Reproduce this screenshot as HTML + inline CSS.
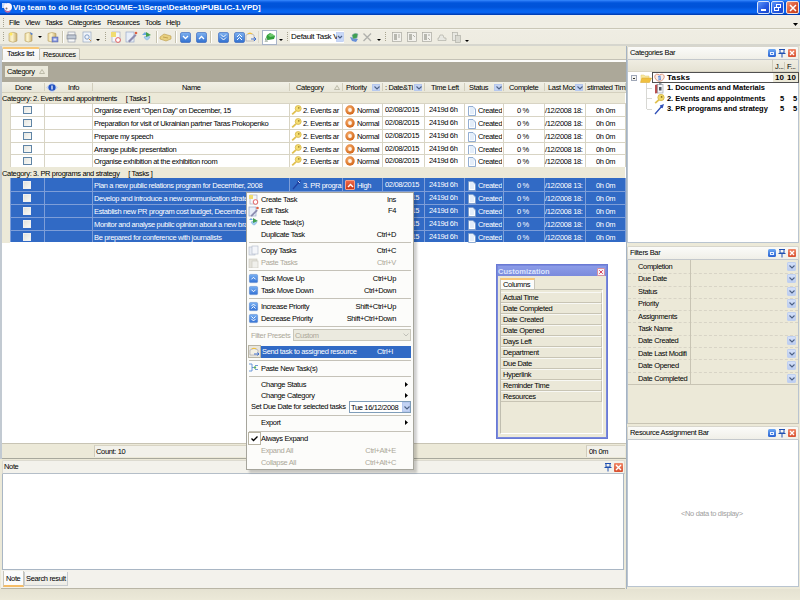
<!DOCTYPE html>
<html><head><meta charset="utf-8">
<style>
*{margin:0;padding:0;box-sizing:border-box}
html,body{width:800px;height:600px;overflow:hidden;background:#ECE9D8;font-family:"Liberation Sans",sans-serif;font-size:7.5px;letter-spacing:-0.35px;color:#000}
div,span{position:absolute}
.t{white-space:nowrap;line-height:9px}
</style></head><body>
<!-- TITLE BAR -->
<div id="title" style="left:0;top:0;width:800px;height:15px;background:linear-gradient(#3A8EFF 0px,#2070F0 1px,#0054DA 3px,#0052D8 7px,#0866F2 11px,#0862F0 13px,#0040B8 14px,#0040B8 15px)">
<svg style="position:absolute;left:2px;top:2px" width="10" height="11" viewBox="0 0 10 11"><rect x="0" y="1" width="4" height="5" fill="#E8F0FF" opacity=".85"/><circle cx="6" cy="5" r="4" fill="#FFF6FA"/><path d="M2 7Q5 11 9 8L8 10Q5 11.5 3 9.5Z" fill="#D86890"/><circle cx="4.5" cy="6.5" r="1" fill="#807070"/></svg>
<span class="t" style="left:13px;top:2px;font-size:8px;font-weight:bold;color:#fff;letter-spacing:0;line-height:11px">Vip team to do list [C:\DOCUME~1\Serge\Desktop\PUBLIC-1.VPD]</span>
<div style="left:757px;top:1px;width:13px;height:13px;border:1px solid #D8E4FA;border-radius:2px;background:linear-gradient(135deg,#5C95F8,#2255E0 60%,#1C47C8)"><div style="left:3px;top:7px;width:5px;height:2px;background:#fff"></div></div>
<div style="left:771px;top:1px;width:13px;height:13px;border:1px solid #D8E4FA;border-radius:2px;background:linear-gradient(135deg,#5C95F8,#2255E0 60%,#1C47C8)"><div style="left:4px;top:2px;width:5px;height:4px;border:1px solid #fff;border-top-width:1.5px"></div><div style="left:2px;top:4.5px;width:5px;height:4px;border:1px solid #fff;border-top-width:1.5px;background:#2A5CE0"></div></div>
<div style="left:786px;top:1px;width:13px;height:13px;border:1px solid #F4E0D8;border-radius:2px;background:linear-gradient(135deg,#F09070,#D8502E 60%,#C0401E)"><svg style="position:absolute;left:2px;top:2px" width="8" height="8"><path d="M1 1L7 7M7 1L1 7" stroke="#fff" stroke-width="1.5"/></svg></div>
</div>
<!-- MENU BAR -->
<div id="menubar" style="left:0;top:15px;width:800px;height:14px;background:linear-gradient(#EEF0F4 0px,#F0EEE5 1.5px,#F0EEE5);border-bottom:1px solid #CAC7B8">
<div style="left:3px;top:3px;width:1px;height:9px;border-left:1px dotted #A8A490"></div>
<span class="t" style="left:9px;top:3px">File</span>
<span class="t" style="left:25px;top:3px">View</span>
<span class="t" style="left:45px;top:3px">Tasks</span>
<span class="t" style="left:68px;top:3px">Categories</span>
<span class="t" style="left:107px;top:3px">Resources</span>
<span class="t" style="left:145px;top:3px">Tools</span>
<span class="t" style="left:166px;top:3px">Help</span>
<svg style="position:absolute;left:793px;top:8px" width="6" height="4"><path d="M0 0H5L2.5 3Z" fill="#000"/></svg>
</div>
<!-- TOOLBAR -->
<div id="toolbar" style="left:0;top:29px;width:800px;height:17px;background:linear-gradient(#FAFAF6 0px,#EFEDE3 1px,#EEECE1);border-bottom:2px solid #D6D6CE">
<svg style="position:absolute;left:0;top:0" width="800" height="16" viewBox="0 0 800 16">
<defs>
<linearGradient id="cyl" x1="0" x2="1"><stop offset="0" stop-color="#E8D8A0"/><stop offset=".4" stop-color="#FFF6D0"/><stop offset="1" stop-color="#C8B070"/></linearGradient>
<linearGradient id="bsq" x1="0" y1="0" x2="0" y2="1"><stop offset="0" stop-color="#7FB2F0"/><stop offset="1" stop-color="#2F6FD0"/></linearGradient>
<linearGradient id="gray" x1="0" x2="1"><stop offset="0" stop-color="#D8D6CC"/><stop offset="1" stop-color="#B0AEA4"/></linearGradient>
</defs>
<g fill="#A8A490"><rect x="3" y="3" width="1" height="1"/><rect x="3" y="5" width="1" height="1"/><rect x="3" y="7" width="1" height="1"/><rect x="3" y="9" width="1" height="1"/><rect x="3" y="11" width="1" height="1"/></g>
<!-- db new -->
<path d="M9 4.5 Q13 2 17 4.5 V12 Q13 14.5 9 12Z" fill="url(#cyl)" stroke="#B8A060" stroke-width=".6"/><circle cx="11" cy="5" r="1.6" fill="#FFE860"/>
<!-- open -->
<path d="M25 4.5 Q28.5 2.5 32 4.5 V12 Q28.5 14 25 12Z" fill="url(#cyl)" stroke="#B8A060" stroke-width=".6"/><path d="M30 3 L33 5 L31 6Z" fill="#4A7CD8"/>
<path d="M38 7H42L40 9Z" fill="#000"/>
<!-- save -->
<path d="M48 4.5 Q52 2.5 56 4.5 V12 Q52 14 48 12Z" fill="url(#cyl)" stroke="#B8A060" stroke-width=".6"/><rect x="52" y="8" width="6" height="5" fill="#8090D8" stroke="#5060A0" stroke-width=".5"/><rect x="53.5" y="9.5" width="3" height="2" fill="#E0E4F8"/>
<rect x="62" y="2" width="1" height="12" fill="#C8C4B0"/><rect x="63" y="2" width="1" height="12" fill="#fff"/>
<!-- print -->
<rect x="68" y="3" width="7" height="3" fill="#F4F4F4" stroke="#8890A0" stroke-width=".6"/><rect x="67" y="6" width="9" height="4" fill="#C0C8D4" stroke="#707888" stroke-width=".6"/><rect x="68" y="10" width="7" height="3" fill="#F8F8F8" stroke="#8890A0" stroke-width=".6"/>
<!-- preview -->
<rect x="83" y="3" width="8" height="10" fill="#F0F4FA" stroke="#98A8C0" stroke-width=".7"/><circle cx="87" cy="8" r="2.2" fill="none" stroke="#6888B8" stroke-width=".8"/><path d="M89 10L91 12" stroke="#D09040"/>
<path d="M96 10H100L98 12Z" fill="#000"/>
<g fill="#A8A490"><rect x="105" y="3" width="1" height="1"/><rect x="105" y="5" width="1" height="1"/><rect x="105" y="7" width="1" height="1"/><rect x="105" y="9" width="1" height="1"/><rect x="105" y="11" width="1" height="1"/></g>
<!-- create task -->
<rect x="112" y="3" width="8" height="10" fill="#F4F6FA" stroke="#98A0B8" stroke-width=".6"/><path d="M111 3H116V8H111Z" fill="#F0DC70"/><circle cx="118" cy="11" r="2.4" fill="#fff" stroke="#E05050" stroke-width=".9"/>
<!-- edit -->
<rect x="126" y="3" width="8" height="10" fill="#E8EEF8" stroke="#98A8C8" stroke-width=".7"/><path d="M128 12 L135 5 L136.5 6.5 L129.5 13.5Z" fill="#8C8CB0"/><circle cx="136" cy="4" r="1.3" fill="#E06040"/>
<!-- delete -->
<path d="M142 6 L145 3 L148 6" fill="#6BA8E0"/><path d="M144 8 Q147 14 150 8 Q147 6 144 8Z" fill="#A8D0F0" stroke="#70A8D8" stroke-width=".5"/><path d="M146 3 L151 6 L146 8Z" fill="#40A050"/>
<rect x="156" y="2" width="1" height="12" fill="#C8C4B0"/><rect x="157" y="2" width="1" height="12" fill="#fff"/>
<!-- glasses -->
<path d="M160 8 L164 5 L171 7 L171 10 L166 12 L160 10Z" fill="#E8D080" stroke="#B89848" stroke-width=".6"/><path d="M163 8 L168 9" stroke="#B89848" stroke-width=".8"/>
<rect x="175" y="2" width="1" height="12" fill="#C8C4B0"/><rect x="176" y="2" width="1" height="12" fill="#fff"/>
<!-- blue squares -->
<rect x="180.5" y="3.5" width="10" height="10" rx="1.5" fill="url(#bsq)" stroke="#3060B8" stroke-width=".6"/><path d="M183 7 L185.5 9.5 L188 7" fill="none" stroke="#fff" stroke-width="1.3"/>
<rect x="196.5" y="3.5" width="10" height="10" rx="1.5" fill="url(#bsq)" stroke="#3060B8" stroke-width=".6"/><path d="M199 10 L201.5 7.5 L204 10" fill="none" stroke="#fff" stroke-width="1.3"/>
<rect x="210" y="2" width="1" height="12" fill="#C8C4B0"/><rect x="211" y="2" width="1" height="12" fill="#fff"/>
<rect x="218.5" y="3.5" width="10" height="10" rx="1.5" fill="url(#bsq)" stroke="#3060B8" stroke-width=".6"/><path d="M221 5.5 L223.5 8 L226 5.5 M221 8.5 L223.5 11 L226 8.5" fill="none" stroke="#fff" stroke-width="1"/>
<rect x="234.5" y="3.5" width="10" height="10" rx="1.5" fill="url(#bsq)" stroke="#3060B8" stroke-width=".6"/><path d="M237 8 L239.5 5.5 L242 8 M237 11 L239.5 8.5 L242 11" fill="none" stroke="#fff" stroke-width="1"/>
<!-- send -->
<path d="M246 6 Q250 3 254 6 V12 H246Z" fill="#F4F0E4" stroke="#A0A0A8" stroke-width=".6"/><path d="M247 5 Q250 2 253 5" fill="#F0C040"/><path d="M251 10 H256 L254 8 M256 10 L254 12" stroke="#4070D0" stroke-width="1" fill="none"/>
<rect x="258" y="2" width="1" height="12" fill="#DDD9CA"/>
<!-- hat button -->
<rect x="262.5" y="1.5" width="14" height="14" fill="#fff" stroke="#A8B4C8" stroke-width="1"/>
<path d="M265 11 L267 6 L270 4 L275 7 L274 10 L268 11Z" fill="#30A038"/><path d="M268 6L272 4.5L275 7L270 8Z" fill="#70C870"/><path d="M264.5 13 L266.5 8 L268 13Z" fill="#B8C4B8"/>
<path d="M279 10H283L281 12Z" fill="#000"/>
<g fill="#A8A490"><rect x="287" y="3" width="1" height="1"/><rect x="287" y="5" width="1" height="1"/><rect x="287" y="7" width="1" height="1"/><rect x="287" y="9" width="1" height="1"/><rect x="287" y="11" width="1" height="1"/></g>
<!-- combo -->
<rect x="290" y="2" width="54" height="12" fill="#fff"/>
<rect x="336.5" y="3.5" width="7" height="9" fill="#C8D8F8" stroke="#B0C4F0" stroke-width=".6"/><path d="M338 7 L340 9 L342 7" fill="none" stroke="#4D6185" stroke-width="1.2"/>
<!-- assign -->
<path d="M350 8 L352 12 L356 13 L358 10" fill="#6890D8"/><path d="M352 6 Q355 3 358 5 L357 9 L353 10Z" fill="#40A050" stroke="#9CB0C8" stroke-width=".5"/>
<path d="M363.5 4.5 L371 12 M371 4.5 L363.5 12" stroke="#B0B0AC" stroke-width="1.4"/>
<path d="M377 10H381L379 12Z" fill="#000"/>
<g fill="#A8A490"><rect x="385" y="3" width="1" height="1"/><rect x="385" y="5" width="1" height="1"/><rect x="385" y="7" width="1" height="1"/><rect x="385" y="9" width="1" height="1"/><rect x="385" y="11" width="1" height="1"/></g>
<g fill="#F2F1EC" stroke="#A8A8A0" stroke-width=".7">
<rect x="392.5" y="3.5" width="9" height="9"/><rect x="407.5" y="3.5" width="9" height="9"/><rect x="422.5" y="3.5" width="9" height="9"/>
</g>
<g fill="#B8B8B0"><rect x="394" y="5" width="3" height="6"/><rect x="409" y="5" width="3" height="6"/><rect x="424" y="5" width="3" height="6"/></g>
<path d="M398 6H400M398 8H400M413 6L415 8M428 6H430M428 9L430 11" stroke="#A0A098" stroke-width=".8"/>
<path d="M438 11.5H446V9H444L443 6H440L439 9H438Z" fill="#E8E8E2" stroke="#A8A8A0" stroke-width=".6"/>
<rect x="452.5" y="3.5" width="5" height="8" fill="#E8E8E2" stroke="#A8A8A0" stroke-width=".6"/><rect x="455.5" y="6.5" width="5" height="7" fill="#DADAD2" stroke="#A8A8A0" stroke-width=".6"/>
<path d="M465 11H469L467 13Z" fill="#000"/>
</svg>
<span class="t" style="left:291px;top:3px;color:#000;width:46px;overflow:hidden;font-size:8px;letter-spacing:-0.3px">Default Task V</span>
</div>
<!-- MAIN LEFT -->
<div id="main" style="left:0;top:46px;width:627px;height:543px;background:#ECE9D8"></div>
<div id="gridwhite" style="left:2px;top:62px;width:624px;height:381px;background:#fff"></div>
<div style="left:626px;top:46px;width:1px;height:398px;background:#B9C4D0"></div>
<!--GRID-->
<div style="left:0px;top:46px;width:2px;height:413px;background:#C2CAD2"></div>
<div style="left:2px;top:47px;width:38px;height:14px;background:linear-gradient(#FCFCFE,#F4F3EE);border:1px solid #C9C6B8;border-bottom:none;border-top:2px solid #F8C878;border-radius:2px 2px 0 0"></div>
<span class="t" style="left:7px;top:49px">Tasks list</span>
<div style="left:39px;top:48px;width:41px;height:12px;background:linear-gradient(#F7F6F1,#E9E7DD);border:1px solid #C9C6B8;border-bottom:none;border-radius:2px 2px 0 0"></div>
<span class="t" style="left:43px;top:50px">Resources</span>
<div style="left:80px;top:59px;width:546px;height:1px;background:#C4C2B6"></div>
<div style="left:2px;top:60px;width:624px;height:2px;background:#FCFCFA"></div>
<div style="left:2px;top:62px;width:624px;height:20px;background:#ACA899"></div>
<div style="left:5px;top:66px;width:43px;height:11px;background:#EBE9DB"></div>
<span class="t" style="left:7px;top:67px">Category</span>
<svg style="position:absolute;left:39px;top:69px" width="6" height="5"><path d="M3 0.5L5.5 4.5H0.5Z" fill="none" stroke="#B0AE9C" stroke-width=".8"/></svg>
<div style="left:2px;top:82px;width:624px;height:11px;background:linear-gradient(#F1F0E6,#E8E6D8);border-bottom:1px solid #D4D0BE"></div>
<div style="left:44px;top:83px;width:1px;height:8px;background:#D2CEBC"></div>
<div style="left:92px;top:83px;width:1px;height:8px;background:#D2CEBC"></div>
<div style="left:289px;top:83px;width:1px;height:8px;background:#D2CEBC"></div>
<div style="left:342px;top:83px;width:1px;height:8px;background:#D2CEBC"></div>
<div style="left:382px;top:83px;width:1px;height:8px;background:#D2CEBC"></div>
<div style="left:424px;top:83px;width:1px;height:8px;background:#D2CEBC"></div>
<div style="left:464px;top:83px;width:1px;height:8px;background:#D2CEBC"></div>
<div style="left:503px;top:83px;width:1px;height:8px;background:#D2CEBC"></div>
<div style="left:544px;top:83px;width:1px;height:8px;background:#D2CEBC"></div>
<div style="left:585px;top:83px;width:1px;height:8px;background:#D2CEBC"></div>
<div style="left:625px;top:83px;width:1px;height:8px;background:#D2CEBC"></div>
<span class="t" style="left:15px;top:83px">Done</span>
<span class="t" style="left:68px;top:83px">Info</span>
<span class="t" style="left:182px;top:83px">Name</span>
<span class="t" style="left:296px;top:83px">Category</span>
<span class="t" style="left:346px;top:83px">Priority</span>
<span class="t" style="left:385px;top:83px">: Date&amp;Ti</span>
<span class="t" style="left:431px;top:83px">Time Left</span>
<span class="t" style="left:469px;top:83px">Status</span>
<span class="t" style="left:509px;top:83px">Complete</span>
<span class="t" style="left:548px;top:83px">Last Moc</span>
<span class="t" style="left:587px;top:83px">stimated Tim</span>
<svg style="position:absolute;left:334px;top:85px" width="6" height="5"><path d="M3 0.5L5.5 4.5H0.5Z" fill="none" stroke="#B0AE9C" stroke-width=".8"/></svg>
<div style="left:372px;top:84px;width:8px;height:7px;background:#C3D3F3;border:1px solid #B6C8EE"><svg style="position:absolute;left:1px;top:1px" width="6" height="4"><path d="M0.5 0.5L3 3L5.5 0.5" fill="none" stroke="#4D6185" stroke-width="1.1"/></svg></div>
<div style="left:414px;top:84px;width:8px;height:7px;background:#C3D3F3;border:1px solid #B6C8EE"><svg style="position:absolute;left:1px;top:1px" width="6" height="4"><path d="M0.5 0.5L3 3L5.5 0.5" fill="none" stroke="#4D6185" stroke-width="1.1"/></svg></div>
<div style="left:494px;top:84px;width:8px;height:7px;background:#C3D3F3;border:1px solid #B6C8EE"><svg style="position:absolute;left:1px;top:1px" width="6" height="4"><path d="M0.5 0.5L3 3L5.5 0.5" fill="none" stroke="#4D6185" stroke-width="1.1"/></svg></div>
<div style="left:575px;top:84px;width:8px;height:7px;background:#C3D3F3;border:1px solid #B6C8EE"><svg style="position:absolute;left:1px;top:1px" width="6" height="4"><path d="M0.5 0.5L3 3L5.5 0.5" fill="none" stroke="#4D6185" stroke-width="1.1"/></svg></div>
<svg style="position:absolute;left:46px;top:82px" width="12" height="11"><path d="M6 0.5L11.5 5.5L6 10.5L0.5 5.5Z" fill="#D0DCF4" stroke="#B8C8EC" stroke-width=".6"/><ellipse cx="6" cy="5.5" rx="3.6" ry="3.3" fill="#1F4FC0"/><rect x="5.4" y="3.5" width="1.2" height="4" fill="#fff"/></svg>
<div style="left:2px;top:93px;width:623px;height:10px;background:#ECE9D8"></div>
<span class="t" style="left:2px;top:94px">Category: 2. Events and appointments &nbsp;&nbsp;&nbsp;&nbsp;[ Tasks ]</span>
<div style="left:2px;top:103px;width:8px;height:65px;background:#ECE9D8"></div>
<div style="left:10px;top:103px;width:615px;height:13px;background:#FFFFFF;border-top:1px solid #D8D4C4"></div>
<div style="left:44px;top:103px;width:1px;height:13px;background:#D8D4C4"></div>
<div style="left:92px;top:103px;width:1px;height:13px;background:#D8D4C4"></div>
<div style="left:289px;top:103px;width:1px;height:13px;background:#D8D4C4"></div>
<div style="left:342px;top:103px;width:1px;height:13px;background:#D8D4C4"></div>
<div style="left:382px;top:103px;width:1px;height:13px;background:#D8D4C4"></div>
<div style="left:424px;top:103px;width:1px;height:13px;background:#D8D4C4"></div>
<div style="left:464px;top:103px;width:1px;height:13px;background:#D8D4C4"></div>
<div style="left:503px;top:103px;width:1px;height:13px;background:#D8D4C4"></div>
<div style="left:544px;top:103px;width:1px;height:13px;background:#D8D4C4"></div>
<div style="left:585px;top:103px;width:1px;height:13px;background:#D8D4C4"></div>
<div style="left:625px;top:103px;width:1px;height:13px;background:#D8D4C4"></div>
<div style="left:10px;top:103px;width:1px;height:13px;background:#D8D4C4"></div>
<div style="left:23px;top:106px;width:9px;height:8px;background:linear-gradient(135deg,#DCDCD4,#FAFAF6);border:1px solid #1C5180;opacity:.7"></div>
<span class="t" style="left:94px;top:106px;color:#000000">Organise event "Open Day" on December, 15</span>
<svg style="position:absolute;left:291px;top:105px" width="11" height="10"><circle cx="7.2" cy="3.5" r="3" fill="#F4DC70" stroke="#D4B040" stroke-width=".7"/><circle cx="7.8" cy="2.9" r=".8" fill="#9A8030"/><path d="M5 5.8L1.2 9.3" stroke="#E0C050" stroke-width="1.8"/></svg>
<span class="t" style="left:303px;top:106px;color:#000000">2. Events ar</span>
<svg style="position:absolute;left:345px;top:105px" width="10" height="10"><defs><radialGradient id="og" cx=".4" cy=".35" r=".7"><stop offset="0" stop-color="#F8B070"/><stop offset="1" stop-color="#D06010"/></radialGradient></defs><circle cx="5" cy="5" r="4.7" fill="url(#og)"/><circle cx="5" cy="5" r="1.9" fill="#FFF4EA"/></svg><span class="t" style="left:357px;top:106px;color:#000">Normal</span>
<span class="t" style="left:385px;top:105px;color:#000000">02/08/2015</span>
<span class="t" style="left:429px;top:105px;color:#000000">2419d 6h</span>
<svg style="position:absolute;left:468px;top:106px" width="8" height="10"><path d="M0.5 0.5H5L7.5 3V9.5H0.5Z" fill="#E4EEFA" stroke="#7B9CC8" stroke-width=".8"/><path d="M1.5 1.5V8.5H6.5V4" fill="none" stroke="#FFFFFF" stroke-width=".9"/></svg>
<span class="t" style="left:478px;top:106px;color:#000000;width:24px;overflow:hidden">Created</span>
<span class="t" style="left:517px;top:106px;color:#000000">0 %</span>
<span class="t" style="left:545px;top:106px;color:#000000">/12/2008 18:</span>
<span class="t" style="left:596px;top:106px;color:#000000">0h 0m</span>
<div style="left:10px;top:116px;width:615px;height:13px;background:#FFFFFF;border-top:1px solid #D8D4C4"></div>
<div style="left:44px;top:116px;width:1px;height:13px;background:#D8D4C4"></div>
<div style="left:92px;top:116px;width:1px;height:13px;background:#D8D4C4"></div>
<div style="left:289px;top:116px;width:1px;height:13px;background:#D8D4C4"></div>
<div style="left:342px;top:116px;width:1px;height:13px;background:#D8D4C4"></div>
<div style="left:382px;top:116px;width:1px;height:13px;background:#D8D4C4"></div>
<div style="left:424px;top:116px;width:1px;height:13px;background:#D8D4C4"></div>
<div style="left:464px;top:116px;width:1px;height:13px;background:#D8D4C4"></div>
<div style="left:503px;top:116px;width:1px;height:13px;background:#D8D4C4"></div>
<div style="left:544px;top:116px;width:1px;height:13px;background:#D8D4C4"></div>
<div style="left:585px;top:116px;width:1px;height:13px;background:#D8D4C4"></div>
<div style="left:625px;top:116px;width:1px;height:13px;background:#D8D4C4"></div>
<div style="left:10px;top:116px;width:1px;height:13px;background:#D8D4C4"></div>
<div style="left:23px;top:119px;width:9px;height:8px;background:linear-gradient(135deg,#DCDCD4,#FAFAF6);border:1px solid #1C5180;opacity:.7"></div>
<span class="t" style="left:94px;top:119px;color:#000000">Preparation for visit of Ukrainian partner Taras Prokopenko</span>
<svg style="position:absolute;left:291px;top:118px" width="11" height="10"><circle cx="7.2" cy="3.5" r="3" fill="#F4DC70" stroke="#D4B040" stroke-width=".7"/><circle cx="7.8" cy="2.9" r=".8" fill="#9A8030"/><path d="M5 5.8L1.2 9.3" stroke="#E0C050" stroke-width="1.8"/></svg>
<span class="t" style="left:303px;top:119px;color:#000000">2. Events ar</span>
<svg style="position:absolute;left:345px;top:118px" width="10" height="10"><defs><radialGradient id="og" cx=".4" cy=".35" r=".7"><stop offset="0" stop-color="#F8B070"/><stop offset="1" stop-color="#D06010"/></radialGradient></defs><circle cx="5" cy="5" r="4.7" fill="url(#og)"/><circle cx="5" cy="5" r="1.9" fill="#FFF4EA"/></svg><span class="t" style="left:357px;top:119px;color:#000">Normal</span>
<span class="t" style="left:385px;top:118px;color:#000000">02/08/2015</span>
<span class="t" style="left:429px;top:118px;color:#000000">2419d 6h</span>
<svg style="position:absolute;left:468px;top:119px" width="8" height="10"><path d="M0.5 0.5H5L7.5 3V9.5H0.5Z" fill="#E4EEFA" stroke="#7B9CC8" stroke-width=".8"/><path d="M1.5 1.5V8.5H6.5V4" fill="none" stroke="#FFFFFF" stroke-width=".9"/></svg>
<span class="t" style="left:478px;top:119px;color:#000000;width:24px;overflow:hidden">Created</span>
<span class="t" style="left:517px;top:119px;color:#000000">0 %</span>
<span class="t" style="left:545px;top:119px;color:#000000">/12/2008 18:</span>
<span class="t" style="left:596px;top:119px;color:#000000">0h 0m</span>
<div style="left:10px;top:129px;width:615px;height:13px;background:#FFFFFF;border-top:1px solid #D8D4C4"></div>
<div style="left:44px;top:129px;width:1px;height:13px;background:#D8D4C4"></div>
<div style="left:92px;top:129px;width:1px;height:13px;background:#D8D4C4"></div>
<div style="left:289px;top:129px;width:1px;height:13px;background:#D8D4C4"></div>
<div style="left:342px;top:129px;width:1px;height:13px;background:#D8D4C4"></div>
<div style="left:382px;top:129px;width:1px;height:13px;background:#D8D4C4"></div>
<div style="left:424px;top:129px;width:1px;height:13px;background:#D8D4C4"></div>
<div style="left:464px;top:129px;width:1px;height:13px;background:#D8D4C4"></div>
<div style="left:503px;top:129px;width:1px;height:13px;background:#D8D4C4"></div>
<div style="left:544px;top:129px;width:1px;height:13px;background:#D8D4C4"></div>
<div style="left:585px;top:129px;width:1px;height:13px;background:#D8D4C4"></div>
<div style="left:625px;top:129px;width:1px;height:13px;background:#D8D4C4"></div>
<div style="left:10px;top:129px;width:1px;height:13px;background:#D8D4C4"></div>
<div style="left:23px;top:132px;width:9px;height:8px;background:linear-gradient(135deg,#DCDCD4,#FAFAF6);border:1px solid #1C5180;opacity:.7"></div>
<span class="t" style="left:94px;top:132px;color:#000000">Prepare my speech</span>
<svg style="position:absolute;left:291px;top:131px" width="11" height="10"><circle cx="7.2" cy="3.5" r="3" fill="#F4DC70" stroke="#D4B040" stroke-width=".7"/><circle cx="7.8" cy="2.9" r=".8" fill="#9A8030"/><path d="M5 5.8L1.2 9.3" stroke="#E0C050" stroke-width="1.8"/></svg>
<span class="t" style="left:303px;top:132px;color:#000000">2. Events ar</span>
<svg style="position:absolute;left:345px;top:131px" width="10" height="10"><defs><radialGradient id="og" cx=".4" cy=".35" r=".7"><stop offset="0" stop-color="#F8B070"/><stop offset="1" stop-color="#D06010"/></radialGradient></defs><circle cx="5" cy="5" r="4.7" fill="url(#og)"/><circle cx="5" cy="5" r="1.9" fill="#FFF4EA"/></svg><span class="t" style="left:357px;top:132px;color:#000">Normal</span>
<span class="t" style="left:385px;top:131px;color:#000000">02/08/2015</span>
<span class="t" style="left:429px;top:131px;color:#000000">2419d 6h</span>
<svg style="position:absolute;left:468px;top:132px" width="8" height="10"><path d="M0.5 0.5H5L7.5 3V9.5H0.5Z" fill="#E4EEFA" stroke="#7B9CC8" stroke-width=".8"/><path d="M1.5 1.5V8.5H6.5V4" fill="none" stroke="#FFFFFF" stroke-width=".9"/></svg>
<span class="t" style="left:478px;top:132px;color:#000000;width:24px;overflow:hidden">Created</span>
<span class="t" style="left:517px;top:132px;color:#000000">0 %</span>
<span class="t" style="left:545px;top:132px;color:#000000">/12/2008 18:</span>
<span class="t" style="left:596px;top:132px;color:#000000">0h 0m</span>
<div style="left:10px;top:142px;width:615px;height:12px;background:#FFFFFF;border-top:1px solid #D8D4C4"></div>
<div style="left:44px;top:142px;width:1px;height:12px;background:#D8D4C4"></div>
<div style="left:92px;top:142px;width:1px;height:12px;background:#D8D4C4"></div>
<div style="left:289px;top:142px;width:1px;height:12px;background:#D8D4C4"></div>
<div style="left:342px;top:142px;width:1px;height:12px;background:#D8D4C4"></div>
<div style="left:382px;top:142px;width:1px;height:12px;background:#D8D4C4"></div>
<div style="left:424px;top:142px;width:1px;height:12px;background:#D8D4C4"></div>
<div style="left:464px;top:142px;width:1px;height:12px;background:#D8D4C4"></div>
<div style="left:503px;top:142px;width:1px;height:12px;background:#D8D4C4"></div>
<div style="left:544px;top:142px;width:1px;height:12px;background:#D8D4C4"></div>
<div style="left:585px;top:142px;width:1px;height:12px;background:#D8D4C4"></div>
<div style="left:625px;top:142px;width:1px;height:12px;background:#D8D4C4"></div>
<div style="left:10px;top:142px;width:1px;height:12px;background:#D8D4C4"></div>
<div style="left:23px;top:145px;width:9px;height:8px;background:linear-gradient(135deg,#DCDCD4,#FAFAF6);border:1px solid #1C5180;opacity:.7"></div>
<span class="t" style="left:94px;top:145px;color:#000000">Arrange public presentation</span>
<svg style="position:absolute;left:291px;top:144px" width="11" height="10"><circle cx="7.2" cy="3.5" r="3" fill="#F4DC70" stroke="#D4B040" stroke-width=".7"/><circle cx="7.8" cy="2.9" r=".8" fill="#9A8030"/><path d="M5 5.8L1.2 9.3" stroke="#E0C050" stroke-width="1.8"/></svg>
<span class="t" style="left:303px;top:145px;color:#000000">2. Events ar</span>
<svg style="position:absolute;left:345px;top:144px" width="10" height="10"><defs><radialGradient id="og" cx=".4" cy=".35" r=".7"><stop offset="0" stop-color="#F8B070"/><stop offset="1" stop-color="#D06010"/></radialGradient></defs><circle cx="5" cy="5" r="4.7" fill="url(#og)"/><circle cx="5" cy="5" r="1.9" fill="#FFF4EA"/></svg><span class="t" style="left:357px;top:145px;color:#000">Normal</span>
<span class="t" style="left:385px;top:144px;color:#000000">02/08/2015</span>
<span class="t" style="left:429px;top:144px;color:#000000">2419d 6h</span>
<svg style="position:absolute;left:468px;top:145px" width="8" height="10"><path d="M0.5 0.5H5L7.5 3V9.5H0.5Z" fill="#E4EEFA" stroke="#7B9CC8" stroke-width=".8"/><path d="M1.5 1.5V8.5H6.5V4" fill="none" stroke="#FFFFFF" stroke-width=".9"/></svg>
<span class="t" style="left:478px;top:145px;color:#000000;width:24px;overflow:hidden">Created</span>
<span class="t" style="left:517px;top:145px;color:#000000">0 %</span>
<span class="t" style="left:545px;top:145px;color:#000000">/12/2008 18:</span>
<span class="t" style="left:596px;top:145px;color:#000000">0h 0m</span>
<div style="left:10px;top:154px;width:615px;height:13px;background:#FFFFFF;border-top:1px solid #D8D4C4"></div>
<div style="left:44px;top:154px;width:1px;height:13px;background:#D8D4C4"></div>
<div style="left:92px;top:154px;width:1px;height:13px;background:#D8D4C4"></div>
<div style="left:289px;top:154px;width:1px;height:13px;background:#D8D4C4"></div>
<div style="left:342px;top:154px;width:1px;height:13px;background:#D8D4C4"></div>
<div style="left:382px;top:154px;width:1px;height:13px;background:#D8D4C4"></div>
<div style="left:424px;top:154px;width:1px;height:13px;background:#D8D4C4"></div>
<div style="left:464px;top:154px;width:1px;height:13px;background:#D8D4C4"></div>
<div style="left:503px;top:154px;width:1px;height:13px;background:#D8D4C4"></div>
<div style="left:544px;top:154px;width:1px;height:13px;background:#D8D4C4"></div>
<div style="left:585px;top:154px;width:1px;height:13px;background:#D8D4C4"></div>
<div style="left:625px;top:154px;width:1px;height:13px;background:#D8D4C4"></div>
<div style="left:10px;top:154px;width:1px;height:13px;background:#D8D4C4"></div>
<div style="left:23px;top:157px;width:9px;height:8px;background:linear-gradient(135deg,#DCDCD4,#FAFAF6);border:1px solid #1C5180;opacity:.7"></div>
<span class="t" style="left:94px;top:157px;color:#000000">Organise exhibition at the exhibition room</span>
<svg style="position:absolute;left:291px;top:156px" width="11" height="10"><circle cx="7.2" cy="3.5" r="3" fill="#F4DC70" stroke="#D4B040" stroke-width=".7"/><circle cx="7.8" cy="2.9" r=".8" fill="#9A8030"/><path d="M5 5.8L1.2 9.3" stroke="#E0C050" stroke-width="1.8"/></svg>
<span class="t" style="left:303px;top:157px;color:#000000">2. Events ar</span>
<svg style="position:absolute;left:345px;top:156px" width="10" height="10"><defs><radialGradient id="og" cx=".4" cy=".35" r=".7"><stop offset="0" stop-color="#F8B070"/><stop offset="1" stop-color="#D06010"/></radialGradient></defs><circle cx="5" cy="5" r="4.7" fill="url(#og)"/><circle cx="5" cy="5" r="1.9" fill="#FFF4EA"/></svg><span class="t" style="left:357px;top:157px;color:#000">Normal</span>
<span class="t" style="left:385px;top:156px;color:#000000">02/08/2015</span>
<span class="t" style="left:429px;top:156px;color:#000000">2419d 6h</span>
<svg style="position:absolute;left:468px;top:157px" width="8" height="10"><path d="M0.5 0.5H5L7.5 3V9.5H0.5Z" fill="#E4EEFA" stroke="#7B9CC8" stroke-width=".8"/><path d="M1.5 1.5V8.5H6.5V4" fill="none" stroke="#FFFFFF" stroke-width=".9"/></svg>
<span class="t" style="left:478px;top:157px;color:#000000;width:24px;overflow:hidden">Created</span>
<span class="t" style="left:517px;top:157px;color:#000000">0 %</span>
<span class="t" style="left:545px;top:157px;color:#000000">/12/2008 18:</span>
<span class="t" style="left:596px;top:157px;color:#000000">0h 0m</span>
<div style="left:2px;top:167px;width:623px;height:11px;background:#ECE9D8"></div>
<span class="t" style="left:2px;top:169px">Category: 3. PR programs and strategy &nbsp;&nbsp;&nbsp;&nbsp;[ Tasks ]</span>
<div style="left:2px;top:178px;width:8px;height:65px;background:#ECE9D8"></div>
<div style="left:10px;top:178px;width:615px;height:13px;background:#316AC5"></div>
<div style="left:44px;top:178px;width:1px;height:13px;background:#7E9ED8"></div>
<div style="left:92px;top:178px;width:1px;height:13px;background:#7E9ED8"></div>
<div style="left:289px;top:178px;width:1px;height:13px;background:#7E9ED8"></div>
<div style="left:342px;top:178px;width:1px;height:13px;background:#7E9ED8"></div>
<div style="left:382px;top:178px;width:1px;height:13px;background:#7E9ED8"></div>
<div style="left:424px;top:178px;width:1px;height:13px;background:#7E9ED8"></div>
<div style="left:464px;top:178px;width:1px;height:13px;background:#7E9ED8"></div>
<div style="left:503px;top:178px;width:1px;height:13px;background:#7E9ED8"></div>
<div style="left:544px;top:178px;width:1px;height:13px;background:#7E9ED8"></div>
<div style="left:585px;top:178px;width:1px;height:13px;background:#7E9ED8"></div>
<div style="left:625px;top:178px;width:1px;height:13px;background:#7E9ED8"></div>
<div style="left:10px;top:178px;width:1px;height:13px;background:#7E9ED8"></div>
<div style="left:23px;top:181px;width:8px;height:8px;background:linear-gradient(135deg,#E2E2DC,#F8F8F4);border:1px solid #F0F0F0"></div>
<span class="t" style="left:94px;top:181px;color:#FFFFFF">Plan a new public relations program for December, 2008</span>
<svg style="position:absolute;left:292px;top:180px" width="9" height="10"><path d="M1 9L7 2M5 2L8 1L7 4" stroke="#2040A0" stroke-width="1.2" fill="none"/><path d="M6 1L8 3" stroke="#fff" stroke-width=".8"/></svg>
<span class="t" style="left:303px;top:181px;color:#FFFFFF">3. PR progra</span>
<div style="left:345px;top:180px;width:10px;height:10px;background:linear-gradient(#F06848,#C83818);border:1px solid #F8A088;border-radius:1px"><svg style="position:absolute;left:1px;top:1px" width="7" height="7"><path d="M1 5L3.5 2.5L6 5" fill="none" stroke="#fff" stroke-width="1.4"/></svg></div><span class="t" style="left:357px;top:181px;color:#fff">High</span>
<span class="t" style="left:385px;top:180px;color:#FFFFFF">02/08/2015</span>
<span class="t" style="left:429px;top:180px;color:#FFFFFF">2419d 6h</span>
<svg style="position:absolute;left:468px;top:181px" width="8" height="10"><path d="M0.5 0.5H5L7.5 3V9.5H0.5Z" fill="#E4EEFA" stroke="#7B9CC8" stroke-width=".8"/><path d="M1.5 1.5V8.5H6.5V4" fill="none" stroke="#FFFFFF" stroke-width=".9"/></svg>
<span class="t" style="left:478px;top:181px;color:#FFFFFF;width:24px;overflow:hidden">Created</span>
<span class="t" style="left:517px;top:181px;color:#FFFFFF">0 %</span>
<span class="t" style="left:545px;top:181px;color:#FFFFFF">/12/2008 13:</span>
<span class="t" style="left:596px;top:181px;color:#FFFFFF">0h 0m</span>
<div style="left:10px;top:191px;width:615px;height:13px;background:#316AC5;border-top:1px solid #7E9ED8"></div>
<div style="left:44px;top:191px;width:1px;height:13px;background:#7E9ED8"></div>
<div style="left:92px;top:191px;width:1px;height:13px;background:#7E9ED8"></div>
<div style="left:289px;top:191px;width:1px;height:13px;background:#7E9ED8"></div>
<div style="left:342px;top:191px;width:1px;height:13px;background:#7E9ED8"></div>
<div style="left:382px;top:191px;width:1px;height:13px;background:#7E9ED8"></div>
<div style="left:424px;top:191px;width:1px;height:13px;background:#7E9ED8"></div>
<div style="left:464px;top:191px;width:1px;height:13px;background:#7E9ED8"></div>
<div style="left:503px;top:191px;width:1px;height:13px;background:#7E9ED8"></div>
<div style="left:544px;top:191px;width:1px;height:13px;background:#7E9ED8"></div>
<div style="left:585px;top:191px;width:1px;height:13px;background:#7E9ED8"></div>
<div style="left:625px;top:191px;width:1px;height:13px;background:#7E9ED8"></div>
<div style="left:10px;top:191px;width:1px;height:13px;background:#7E9ED8"></div>
<div style="left:23px;top:194px;width:8px;height:8px;background:linear-gradient(135deg,#E2E2DC,#F8F8F4);border:1px solid #F0F0F0"></div>
<span class="t" style="left:94px;top:194px;color:#FFFFFF">Develop and introduce a new communication strategy</span>
<svg style="position:absolute;left:292px;top:193px" width="9" height="10"><path d="M1 9L7 2M5 2L8 1L7 4" stroke="#2040A0" stroke-width="1.2" fill="none"/><path d="M6 1L8 3" stroke="#fff" stroke-width=".8"/></svg>
<span class="t" style="left:303px;top:194px;color:#FFFFFF">3. PR progra</span>
<div style="left:345px;top:193px;width:10px;height:10px;background:linear-gradient(#F06848,#C83818);border:1px solid #F8A088;border-radius:1px"><svg style="position:absolute;left:1px;top:1px" width="7" height="7"><path d="M1 5L3.5 2.5L6 5" fill="none" stroke="#fff" stroke-width="1.4"/></svg></div><span class="t" style="left:357px;top:194px;color:#fff">High</span>
<span class="t" style="left:385px;top:193px;color:#FFFFFF">02/08/2015</span>
<span class="t" style="left:429px;top:193px;color:#FFFFFF">2419d 6h</span>
<svg style="position:absolute;left:468px;top:194px" width="8" height="10"><path d="M0.5 0.5H5L7.5 3V9.5H0.5Z" fill="#E4EEFA" stroke="#7B9CC8" stroke-width=".8"/><path d="M1.5 1.5V8.5H6.5V4" fill="none" stroke="#FFFFFF" stroke-width=".9"/></svg>
<span class="t" style="left:478px;top:194px;color:#FFFFFF;width:24px;overflow:hidden">Created</span>
<span class="t" style="left:517px;top:194px;color:#FFFFFF">0 %</span>
<span class="t" style="left:545px;top:194px;color:#FFFFFF">/12/2008 18:</span>
<span class="t" style="left:596px;top:194px;color:#FFFFFF">0h 0m</span>
<div style="left:10px;top:204px;width:615px;height:13px;background:#316AC5;border-top:1px solid #7E9ED8"></div>
<div style="left:44px;top:204px;width:1px;height:13px;background:#7E9ED8"></div>
<div style="left:92px;top:204px;width:1px;height:13px;background:#7E9ED8"></div>
<div style="left:289px;top:204px;width:1px;height:13px;background:#7E9ED8"></div>
<div style="left:342px;top:204px;width:1px;height:13px;background:#7E9ED8"></div>
<div style="left:382px;top:204px;width:1px;height:13px;background:#7E9ED8"></div>
<div style="left:424px;top:204px;width:1px;height:13px;background:#7E9ED8"></div>
<div style="left:464px;top:204px;width:1px;height:13px;background:#7E9ED8"></div>
<div style="left:503px;top:204px;width:1px;height:13px;background:#7E9ED8"></div>
<div style="left:544px;top:204px;width:1px;height:13px;background:#7E9ED8"></div>
<div style="left:585px;top:204px;width:1px;height:13px;background:#7E9ED8"></div>
<div style="left:625px;top:204px;width:1px;height:13px;background:#7E9ED8"></div>
<div style="left:10px;top:204px;width:1px;height:13px;background:#7E9ED8"></div>
<div style="left:23px;top:207px;width:8px;height:8px;background:linear-gradient(135deg,#E2E2DC,#F8F8F4);border:1px solid #F0F0F0"></div>
<span class="t" style="left:94px;top:207px;color:#FFFFFF">Establish new PR program cost budget, December</span>
<svg style="position:absolute;left:292px;top:206px" width="9" height="10"><path d="M1 9L7 2M5 2L8 1L7 4" stroke="#2040A0" stroke-width="1.2" fill="none"/><path d="M6 1L8 3" stroke="#fff" stroke-width=".8"/></svg>
<span class="t" style="left:303px;top:207px;color:#FFFFFF">3. PR progra</span>
<div style="left:345px;top:206px;width:10px;height:10px;background:linear-gradient(#F06848,#C83818);border:1px solid #F8A088;border-radius:1px"><svg style="position:absolute;left:1px;top:1px" width="7" height="7"><path d="M1 5L3.5 2.5L6 5" fill="none" stroke="#fff" stroke-width="1.4"/></svg></div><span class="t" style="left:357px;top:207px;color:#fff">High</span>
<span class="t" style="left:385px;top:206px;color:#FFFFFF">02/08/2015</span>
<span class="t" style="left:429px;top:206px;color:#FFFFFF">2419d 6h</span>
<svg style="position:absolute;left:468px;top:207px" width="8" height="10"><path d="M0.5 0.5H5L7.5 3V9.5H0.5Z" fill="#E4EEFA" stroke="#7B9CC8" stroke-width=".8"/><path d="M1.5 1.5V8.5H6.5V4" fill="none" stroke="#FFFFFF" stroke-width=".9"/></svg>
<span class="t" style="left:478px;top:207px;color:#FFFFFF;width:24px;overflow:hidden">Created</span>
<span class="t" style="left:517px;top:207px;color:#FFFFFF">0 %</span>
<span class="t" style="left:545px;top:207px;color:#FFFFFF">/12/2008 18:</span>
<span class="t" style="left:596px;top:207px;color:#FFFFFF">0h 0m</span>
<div style="left:10px;top:217px;width:615px;height:13px;background:#316AC5;border-top:1px solid #7E9ED8"></div>
<div style="left:44px;top:217px;width:1px;height:13px;background:#7E9ED8"></div>
<div style="left:92px;top:217px;width:1px;height:13px;background:#7E9ED8"></div>
<div style="left:289px;top:217px;width:1px;height:13px;background:#7E9ED8"></div>
<div style="left:342px;top:217px;width:1px;height:13px;background:#7E9ED8"></div>
<div style="left:382px;top:217px;width:1px;height:13px;background:#7E9ED8"></div>
<div style="left:424px;top:217px;width:1px;height:13px;background:#7E9ED8"></div>
<div style="left:464px;top:217px;width:1px;height:13px;background:#7E9ED8"></div>
<div style="left:503px;top:217px;width:1px;height:13px;background:#7E9ED8"></div>
<div style="left:544px;top:217px;width:1px;height:13px;background:#7E9ED8"></div>
<div style="left:585px;top:217px;width:1px;height:13px;background:#7E9ED8"></div>
<div style="left:625px;top:217px;width:1px;height:13px;background:#7E9ED8"></div>
<div style="left:10px;top:217px;width:1px;height:13px;background:#7E9ED8"></div>
<div style="left:23px;top:220px;width:8px;height:8px;background:linear-gradient(135deg,#E2E2DC,#F8F8F4);border:1px solid #F0F0F0"></div>
<span class="t" style="left:94px;top:220px;color:#FFFFFF">Monitor and analyse public opinion about a new brand</span>
<svg style="position:absolute;left:292px;top:219px" width="9" height="10"><path d="M1 9L7 2M5 2L8 1L7 4" stroke="#2040A0" stroke-width="1.2" fill="none"/><path d="M6 1L8 3" stroke="#fff" stroke-width=".8"/></svg>
<span class="t" style="left:303px;top:220px;color:#FFFFFF">3. PR progra</span>
<div style="left:345px;top:219px;width:10px;height:10px;background:linear-gradient(#F06848,#C83818);border:1px solid #F8A088;border-radius:1px"><svg style="position:absolute;left:1px;top:1px" width="7" height="7"><path d="M1 5L3.5 2.5L6 5" fill="none" stroke="#fff" stroke-width="1.4"/></svg></div><span class="t" style="left:357px;top:220px;color:#fff">High</span>
<span class="t" style="left:385px;top:219px;color:#FFFFFF">02/08/2015</span>
<span class="t" style="left:429px;top:219px;color:#FFFFFF">2419d 6h</span>
<svg style="position:absolute;left:468px;top:220px" width="8" height="10"><path d="M0.5 0.5H5L7.5 3V9.5H0.5Z" fill="#E4EEFA" stroke="#7B9CC8" stroke-width=".8"/><path d="M1.5 1.5V8.5H6.5V4" fill="none" stroke="#FFFFFF" stroke-width=".9"/></svg>
<span class="t" style="left:478px;top:220px;color:#FFFFFF;width:24px;overflow:hidden">Created</span>
<span class="t" style="left:517px;top:220px;color:#FFFFFF">0 %</span>
<span class="t" style="left:545px;top:220px;color:#FFFFFF">/12/2008 18:</span>
<span class="t" style="left:596px;top:220px;color:#FFFFFF">0h 0m</span>
<div style="left:10px;top:230px;width:615px;height:12px;background:#316AC5;border-top:1px solid #7E9ED8"></div>
<div style="left:44px;top:230px;width:1px;height:12px;background:#7E9ED8"></div>
<div style="left:92px;top:230px;width:1px;height:12px;background:#7E9ED8"></div>
<div style="left:289px;top:230px;width:1px;height:12px;background:#7E9ED8"></div>
<div style="left:342px;top:230px;width:1px;height:12px;background:#7E9ED8"></div>
<div style="left:382px;top:230px;width:1px;height:12px;background:#7E9ED8"></div>
<div style="left:424px;top:230px;width:1px;height:12px;background:#7E9ED8"></div>
<div style="left:464px;top:230px;width:1px;height:12px;background:#7E9ED8"></div>
<div style="left:503px;top:230px;width:1px;height:12px;background:#7E9ED8"></div>
<div style="left:544px;top:230px;width:1px;height:12px;background:#7E9ED8"></div>
<div style="left:585px;top:230px;width:1px;height:12px;background:#7E9ED8"></div>
<div style="left:625px;top:230px;width:1px;height:12px;background:#7E9ED8"></div>
<div style="left:10px;top:230px;width:1px;height:12px;background:#7E9ED8"></div>
<div style="left:23px;top:233px;width:8px;height:8px;background:linear-gradient(135deg,#E2E2DC,#F8F8F4);border:1px solid #F0F0F0"></div>
<span class="t" style="left:94px;top:233px;color:#FFFFFF">Be prepared for conference with journalists</span>
<svg style="position:absolute;left:292px;top:232px" width="9" height="10"><path d="M1 9L7 2M5 2L8 1L7 4" stroke="#2040A0" stroke-width="1.2" fill="none"/><path d="M6 1L8 3" stroke="#fff" stroke-width=".8"/></svg>
<span class="t" style="left:303px;top:233px;color:#FFFFFF">3. PR progra</span>
<div style="left:345px;top:232px;width:10px;height:10px;background:linear-gradient(#F06848,#C83818);border:1px solid #F8A088;border-radius:1px"><svg style="position:absolute;left:1px;top:1px" width="7" height="7"><path d="M1 5L3.5 2.5L6 5" fill="none" stroke="#fff" stroke-width="1.4"/></svg></div><span class="t" style="left:357px;top:233px;color:#fff">High</span>
<span class="t" style="left:385px;top:232px;color:#FFFFFF">02/08/2015</span>
<span class="t" style="left:429px;top:232px;color:#FFFFFF">2419d 6h</span>
<svg style="position:absolute;left:468px;top:233px" width="8" height="10"><path d="M0.5 0.5H5L7.5 3V9.5H0.5Z" fill="#E4EEFA" stroke="#7B9CC8" stroke-width=".8"/><path d="M1.5 1.5V8.5H6.5V4" fill="none" stroke="#FFFFFF" stroke-width=".9"/></svg>
<span class="t" style="left:478px;top:233px;color:#FFFFFF;width:24px;overflow:hidden">Created</span>
<span class="t" style="left:517px;top:233px;color:#FFFFFF">0 %</span>
<span class="t" style="left:545px;top:233px;color:#FFFFFF">/12/2008 18:</span>
<span class="t" style="left:596px;top:233px;color:#FFFFFF">0h 0m</span>
<div style="left:2px;top:443px;width:624px;height:16px;background:#ECE9D8;border-top:1px solid #C8C4B4;border-bottom:1px solid #A8A89C"></div>
<div style="left:94px;top:445px;width:195px;height:12px;background:#F2F1EA;border-left:1px solid #D0CCBC;border-top:1px solid #D8D4C4"></div>
<span class="t" style="left:96px;top:447px">Count: 10</span>
<div style="left:586px;top:445px;width:39px;height:12px;background:#F2F1EA;border-left:1px solid #D0CCBC;border-top:1px solid #D8D4C4"></div>
<span class="t" style="left:589px;top:447px">0h 0m</span>
<!--/GRID-->
<!-- note -->
<div id="notehdr" style="left:2px;top:460px;width:623px;height:14px;background:#F3F2EC;border:1px solid #DCDAD0;border-radius:2px 2px 0 0;border-bottom:1px solid #B4BEC8"></div>
<div id="notecontent" style="left:2px;top:474px;width:622px;height:96px;background:#fff;border-left:1px solid #A9B6C4;border-right:1px solid #A9B6C4;border-bottom:1px solid #A9B6C4"></div>
<div id="notetabs" style="left:1px;top:570px;width:624px;height:19px;background:#F3F2EC;border-bottom:1px solid #B9B6A6"></div>
<!--NOTE-->
<span class="t" style="left:4px;top:462px">Note</span>
<svg style="position:absolute;left:604px;top:463px" width="8" height="9"><path d="M1 0.5H7M2 0.5V4H6V0.5M0.5 4.5H7.5M4 4.5V8.5" fill="none" stroke="#2050B0" stroke-width="1"/></svg>
<div style="left:614px;top:463px;width:9px;height:9px;background:linear-gradient(#F08868,#D85030);border-radius:1px"><svg style="position:absolute;left:1px;top:1px" width="7" height="7"><path d="M1 1L6 6M6 1L1 6" stroke="#fff" stroke-width="1.4"/></svg></div>
<div style="left:3px;top:571px;width:21px;height:16px;background:#FCFCFC;border:1px solid #C8C6BA;border-top:none;border-bottom:2px solid #F4BC68"></div>
<span class="t" style="left:6px;top:574px">Note</span>
<div style="left:24px;top:572px;width:44px;height:14px;background:linear-gradient(#F8F8F6,#EEEDE6);border:1px solid #C8CCD0;border-top:none"></div>
<span class="t" style="left:26px;top:574px">Search result</span>
<!--/NOTE-->
<!-- STATUS BAR -->
<div id="status" style="left:0;top:589px;width:800px;height:11px;background:linear-gradient(#E5E2D2,#ECE9D8)"></div>
<!-- RIGHT PANEL -->
<div id="right" style="left:626px;top:46px;width:174px;height:543px;background:#ECE9D8;border-left:1px solid #A5B3C2"></div>
<!--RIGHT-->
<div style="left:627px;top:46px;width:172px;height:14px;background:linear-gradient(#FBFBF9,#F0EFE8);border:1px solid #D8D6CC;border-radius:2px 2px 0 0;border-bottom:1px solid #C4C8CC"></div>
<span class="t" style="left:630px;top:48px">Categories Bar</span>
<div style="left:788px;top:49px;width:8px;height:8px;background:linear-gradient(#F08868,#D85030);border-radius:1px"><svg style="position:absolute;left:1px;top:1px" width="6" height="6"><path d="M1 1L5 5M5 1L1 5" stroke="#fff" stroke-width="1.3"/></svg></div>
<svg style="position:absolute;left:778px;top:49px" width="8" height="9"><path d="M1 0.5H7M2 0.5V4H6V0.5M0.5 4.5H7.5M4 4.5V8.5" fill="none" stroke="#2050B0" stroke-width="1"/></svg>
<div style="left:768px;top:49px;width:8px;height:8px;background:linear-gradient(#6CA8F4,#2A62D0);border-radius:1.5px"><div style="left:2px;top:2.5px;width:4px;height:3px;border:1px solid #E8F0FF"></div></div>
<div style="left:627px;top:60px;width:172px;height:183px;background:#fff;border:1px solid #B9C4D0;border-top:none"></div>
<div style="left:628px;top:60px;width:170px;height:12px;background:linear-gradient(#EFEDE2,#E6E3D4);border-bottom:1px solid #D8D4C4"></div>
<span class="t" style="left:775px;top:62px">J...</span><div style="left:784px;top:62px;width:1px;height:8px;background:#D0CCBC"></div><span class="t" style="left:787px;top:62px">F...</span>
<div style="left:772px;top:60px;width:1px;height:12px;background:#D0CCBC"></div>
<div style="left:652px;top:72px;width:147px;height:11px;border:1px solid #505050;background:#fff"></div>
<div style="left:773px;top:73px;width:25px;height:9px;background:#ECE9D8"></div>
<div style="left:631px;top:75px;width:6px;height:6px;border:1px solid #A0A8B8;background:#F4F4F0"><div style="left:1px;top:2px;width:2px;height:1px;background:#303030"></div></div>
<svg style="position:absolute;left:640px;top:73px" width="12" height="10"><path d="M1 2H4L5 3H9V9H1Z" fill="#F8E8A0" stroke="#E0C870" stroke-width=".5"/><path d="M2 5H11.5L9.5 9.5H0.5Z" fill="#F0C040" stroke="#D8A830" stroke-width=".5"/></svg>
<svg style="position:absolute;left:654px;top:73px" width="11" height="10"><path d="M5.5 2Q2 0 0.8 3Q0.5 7 5.5 8.5Q10.5 7 10.2 3Q9 0 5.5 2Z" fill="#FBEDE6" stroke="#E09A80" stroke-width="1"/><path d="M4 3L6.5 2.5L7 7L4.5 7.5Z" fill="#6A94DC"/><path d="M5 4V6.5" stroke="#fff" stroke-width=".6"/></svg>
<span class="t" style="left:667px;top:73px;font-weight:bold;letter-spacing:0.2px;font-size:8px">Tasks</span>
<span class="t" style="left:775px;top:73px;font-weight:bold;letter-spacing:0;font-size:8px">10</span><span class="t" style="left:787px;top:73px;font-weight:bold;letter-spacing:0;font-size:8px">10</span>
<div style="left:646px;top:83px;width:1px;height:26px;background:#D8D8D4"></div>
<div style="left:647px;top:88px;width:5px;height:1px;background:#D8D8D4"></div>
<div style="left:647px;top:98px;width:5px;height:1px;background:#D8D8D4"></div>
<div style="left:647px;top:109px;width:5px;height:1px;background:#D8D8D4"></div>
<svg style="position:absolute;left:654px;top:83px" width="10" height="11"><path d="M1 2L4 1V10L1 10.5Z" fill="#B85050"/><rect x="3.5" y="1.5" width="5.5" height="8.5" fill="#F4F4F8" stroke="#9098A0" stroke-width=".6"/><rect x="5" y="4" width="2.5" height="3.5" fill="#505860"/><rect x="5" y="0" width="2.5" height="2" fill="#9098A0"/></svg>
<svg style="position:absolute;left:654px;top:94px" width="11" height="10"><circle cx="7" cy="3.5" r="3.2" fill="#F2DA68" stroke="#D0B040" stroke-width=".7"/><circle cx="7.6" cy="2.9" r=".9" fill="#8A7020"/><path d="M4.8 5.8L1.2 9.2" stroke="#E0C050" stroke-width="1.8"/></svg>
<svg style="position:absolute;left:654px;top:104px" width="10" height="11"><path d="M1 10L8 2M6 2L9 1L8 4" stroke="#3050B8" stroke-width="1.3" fill="none"/></svg>
<span class="t" style="left:667px;top:83px;font-weight:bold;letter-spacing:-0.05px">1. Documents and Materials</span>
<span class="t" style="left:667px;top:94px;font-weight:bold;letter-spacing:-0.05px">2. Events and appointments</span>
<span class="t" style="left:780px;top:94px;font-weight:bold;letter-spacing:0">5</span><span class="t" style="left:793px;top:94px;font-weight:bold;letter-spacing:0">5</span>
<span class="t" style="left:667px;top:104px;font-weight:bold;letter-spacing:-0.05px">3. PR programs and strategy</span>
<span class="t" style="left:780px;top:104px;font-weight:bold;letter-spacing:0">5</span><span class="t" style="left:793px;top:104px;font-weight:bold;letter-spacing:0">5</span>
<div style="left:627px;top:246px;width:172px;height:14px;background:linear-gradient(#FBFBF9,#F0EFE8);border:1px solid #D8D6CC;border-radius:2px 2px 0 0;border-bottom:1px solid #C4C8CC"></div>
<span class="t" style="left:630px;top:248px">Filters Bar</span>
<div style="left:788px;top:249px;width:8px;height:8px;background:linear-gradient(#F08868,#D85030);border-radius:1px"><svg style="position:absolute;left:1px;top:1px" width="6" height="6"><path d="M1 1L5 5M5 1L1 5" stroke="#fff" stroke-width="1.3"/></svg></div>
<svg style="position:absolute;left:778px;top:249px" width="8" height="9"><path d="M1 0.5H7M2 0.5V4H6V0.5M0.5 4.5H7.5M4 4.5V8.5" fill="none" stroke="#2050B0" stroke-width="1"/></svg>
<div style="left:768px;top:249px;width:8px;height:8px;background:linear-gradient(#6CA8F4,#2A62D0);border-radius:1.5px"><div style="left:2px;top:2.5px;width:4px;height:3px;border:1px solid #E8F0FF"></div></div>
<div style="left:627px;top:260px;width:172px;height:164px;background:#ECE9D8;border-left:1px solid #B9C4D0;border-right:1px solid #B9C4D0;border-bottom:1px solid #C8C4B4"></div>
<div style="left:628px;top:273px;width:170px;height:1px;border-top:1px dashed #D8D4C6"></div>
<span class="t" style="left:638px;top:262px;width:52px;overflow:hidden">Completion</span>
<div style="left:787px;top:262px;width:9px;height:9px;background:linear-gradient(#D4E0F8,#BCCDF0);border:1px solid #C0D0F0;border-radius:1px"><svg style="position:absolute;left:1px;top:2px" width="6" height="4"><path d="M0.5 0.5L3 3L5.5 0.5" fill="none" stroke="#4D6185" stroke-width="1.1"/></svg></div>
<div style="left:628px;top:286px;width:170px;height:1px;border-top:1px dashed #D8D4C6"></div>
<span class="t" style="left:638px;top:274px;width:52px;overflow:hidden">Due Date</span>
<div style="left:787px;top:274px;width:9px;height:9px;background:linear-gradient(#D4E0F8,#BCCDF0);border:1px solid #C0D0F0;border-radius:1px"><svg style="position:absolute;left:1px;top:2px" width="6" height="4"><path d="M0.5 0.5L3 3L5.5 0.5" fill="none" stroke="#4D6185" stroke-width="1.1"/></svg></div>
<div style="left:628px;top:298px;width:170px;height:1px;border-top:1px dashed #D8D4C6"></div>
<span class="t" style="left:638px;top:287px;width:52px;overflow:hidden">Status</span>
<div style="left:787px;top:287px;width:9px;height:9px;background:linear-gradient(#D4E0F8,#BCCDF0);border:1px solid #C0D0F0;border-radius:1px"><svg style="position:absolute;left:1px;top:2px" width="6" height="4"><path d="M0.5 0.5L3 3L5.5 0.5" fill="none" stroke="#4D6185" stroke-width="1.1"/></svg></div>
<div style="left:628px;top:310px;width:170px;height:1px;border-top:1px dashed #D8D4C6"></div>
<span class="t" style="left:638px;top:299px;width:52px;overflow:hidden">Priority</span>
<div style="left:787px;top:299px;width:9px;height:9px;background:linear-gradient(#D4E0F8,#BCCDF0);border:1px solid #C0D0F0;border-radius:1px"><svg style="position:absolute;left:1px;top:2px" width="6" height="4"><path d="M0.5 0.5L3 3L5.5 0.5" fill="none" stroke="#4D6185" stroke-width="1.1"/></svg></div>
<div style="left:628px;top:322px;width:170px;height:1px;border-top:1px dashed #D8D4C6"></div>
<span class="t" style="left:638px;top:312px;width:52px;overflow:hidden">Assignments</span>
<div style="left:787px;top:312px;width:9px;height:9px;background:linear-gradient(#D4E0F8,#BCCDF0);border:1px solid #C0D0F0;border-radius:1px"><svg style="position:absolute;left:1px;top:2px" width="6" height="4"><path d="M0.5 0.5L3 3L5.5 0.5" fill="none" stroke="#4D6185" stroke-width="1.1"/></svg></div>
<div style="left:628px;top:335px;width:170px;height:1px;border-top:1px dashed #D8D4C6"></div>
<span class="t" style="left:638px;top:324px;width:52px;overflow:hidden">Task Name</span>
<div style="left:628px;top:347px;width:170px;height:1px;border-top:1px dashed #D8D4C6"></div>
<span class="t" style="left:638px;top:336px;width:52px;overflow:hidden">Date Created</span>
<div style="left:787px;top:336px;width:9px;height:9px;background:linear-gradient(#D4E0F8,#BCCDF0);border:1px solid #C0D0F0;border-radius:1px"><svg style="position:absolute;left:1px;top:2px" width="6" height="4"><path d="M0.5 0.5L3 3L5.5 0.5" fill="none" stroke="#4D6185" stroke-width="1.1"/></svg></div>
<div style="left:628px;top:359px;width:170px;height:1px;border-top:1px dashed #D8D4C6"></div>
<span class="t" style="left:638px;top:349px;width:52px;overflow:hidden">Date Last Modifi</span>
<div style="left:787px;top:349px;width:9px;height:9px;background:linear-gradient(#D4E0F8,#BCCDF0);border:1px solid #C0D0F0;border-radius:1px"><svg style="position:absolute;left:1px;top:2px" width="6" height="4"><path d="M0.5 0.5L3 3L5.5 0.5" fill="none" stroke="#4D6185" stroke-width="1.1"/></svg></div>
<div style="left:628px;top:372px;width:170px;height:1px;border-top:1px dashed #D8D4C6"></div>
<span class="t" style="left:638px;top:361px;width:52px;overflow:hidden">Date Opened</span>
<div style="left:787px;top:361px;width:9px;height:9px;background:linear-gradient(#D4E0F8,#BCCDF0);border:1px solid #C0D0F0;border-radius:1px"><svg style="position:absolute;left:1px;top:2px" width="6" height="4"><path d="M0.5 0.5L3 3L5.5 0.5" fill="none" stroke="#4D6185" stroke-width="1.1"/></svg></div>
<div style="left:628px;top:384px;width:170px;height:1px;border-top:1px dashed #D8D4C6"></div>
<span class="t" style="left:638px;top:374px;width:52px;overflow:hidden">Date Completed</span>
<div style="left:787px;top:374px;width:9px;height:9px;background:linear-gradient(#D4E0F8,#BCCDF0);border:1px solid #C0D0F0;border-radius:1px"><svg style="position:absolute;left:1px;top:2px" width="6" height="4"><path d="M0.5 0.5L3 3L5.5 0.5" fill="none" stroke="#4D6185" stroke-width="1.1"/></svg></div>
<div style="left:690px;top:260px;width:1px;height:124px;background:#C8C4B4"></div>
<div style="left:628px;top:384px;width:170px;height:1px;background:#C8C4B4"></div>
<div style="left:627px;top:426px;width:172px;height:14px;background:linear-gradient(#FBFBF9,#F0EFE8);border:1px solid #D8D6CC;border-radius:2px 2px 0 0;border-bottom:1px solid #C4C8CC"></div>
<span class="t" style="left:630px;top:428px">Resource Assignment Bar</span>
<div style="left:788px;top:429px;width:8px;height:8px;background:linear-gradient(#F08868,#D85030);border-radius:1px"><svg style="position:absolute;left:1px;top:1px" width="6" height="6"><path d="M1 1L5 5M5 1L1 5" stroke="#fff" stroke-width="1.3"/></svg></div>
<svg style="position:absolute;left:778px;top:429px" width="8" height="9"><path d="M1 0.5H7M2 0.5V4H6V0.5M0.5 4.5H7.5M4 4.5V8.5" fill="none" stroke="#2050B0" stroke-width="1"/></svg>
<div style="left:768px;top:429px;width:8px;height:8px;background:linear-gradient(#6CA8F4,#2A62D0);border-radius:1.5px"><div style="left:2px;top:2.5px;width:4px;height:3px;border:1px solid #E8F0FF"></div></div>
<div style="left:627px;top:440px;width:172px;height:147px;background:#fff;border:1px solid #B9C4D0;border-top:none"></div>
<span class="t" style="left:681px;top:509px;color:#A0A0A0">&lt;No data to display&gt;</span>
<!--/RIGHT-->
<!--MENU-->
<div style="left:249px;top:195px;width:168px;height:278px;background:rgba(0,0,0,.18);filter:blur(1px)"></div>
<div style="left:246px;top:192px;width:168px;height:278px;background:#FCFCFA;border:1px solid #A6A59C"></div>
<svg style="position:absolute;left:248px;top:194px" width="11" height="11" viewBox="0 0 11 11"><rect x="2" y="1" width="7" height="9" fill="#F4F6FA" stroke="#98A0B8" stroke-width=".6"/><path d="M1 1H5V5H1Z" fill="#F0DC70"/><circle cx="7.5" cy="8" r="2.3" fill="#fff" stroke="#E05050" stroke-width=".9"/></svg>
<span class="t" style="left:261px;top:195px;color:#000">Create Task</span>
<span class="t" style="left:387.03125px;top:195px;color:#000">Ins</span>
<svg style="position:absolute;left:248px;top:206px" width="11" height="11" viewBox="0 0 11 11"><rect x="1" y="1" width="7" height="9" fill="#E8EEF8" stroke="#98A8C8" stroke-width=".7"/><path d="M2.5 9.5L8.5 3.5L9.8 4.8L3.8 10.8Z" fill="#8C8CB0"/><circle cx="9.5" cy="2" r="1.3" fill="#E06040"/></svg>
<span class="t" style="left:261px;top:206px;color:#000">Edit Task</span>
<span class="t" style="left:387.9375px;top:206px;color:#000">F4</span>
<svg style="position:absolute;left:248px;top:217px" width="11" height="11" viewBox="0 0 11 11"><path d="M1 3L3 1L5 3" fill="#6BA8E0"/><path d="M3 5Q6 11 9 5Q6 3 3 5Z" fill="#A8D0F0" stroke="#70A8D8" stroke-width=".5"/><path d="M5 1L10 4L5 6Z" fill="#40A050"/></svg>
<span class="t" style="left:261px;top:218px;color:#000">Delete Task(s)</span>
<span class="t" style="left:261px;top:230px;color:#000">Duplicate Task</span>
<span class="t" style="left:376.625px;top:230px;color:#000">Ctrl+D</span>
<div style="left:249px;top:242px;width:162px;height:1px;background:#C5C2B8"></div>
<svg style="position:absolute;left:248px;top:245px" width="11" height="11" viewBox="0 0 11 11"><rect x="1" y="2" width="6" height="8" fill="#E8ECF4" stroke="#B0B8C8" stroke-width=".6"/><rect x="4" y="1" width="6" height="8" fill="#F4F6FA" stroke="#B0B8C8" stroke-width=".6"/></svg>
<span class="t" style="left:261px;top:246px;color:#000">Copy Tasks</span>
<span class="t" style="left:376.625px;top:246px;color:#000">Ctrl+C</span>
<svg style="position:absolute;left:248px;top:257px" width="11" height="11" viewBox="0 0 11 11"><rect x="1" y="2" width="8" height="9" fill="#E4E2DA" stroke="#C8C6BC" stroke-width=".6"/><rect x="4" y="4" width="6" height="7" fill="#F0F0EC" stroke="#C8C6BC" stroke-width=".6"/></svg>
<span class="t" style="left:261px;top:258px;color:#ACA899">Paste Tasks</span>
<span class="t" style="left:377.046875px;top:258px;color:#ACA899">Ctrl+V</span>
<div style="left:249px;top:270px;width:162px;height:1px;background:#C5C2B8"></div>
<svg style="position:absolute;left:248px;top:273px" width="11" height="11" viewBox="0 0 11 11"><defs><linearGradient id="mg" x1="0" y1="0" x2="0" y2="1"><stop offset="0" stop-color="#78B0F4"/><stop offset="1" stop-color="#3472D4"/></linearGradient></defs><g transform="translate(1,1) scale(.82)"><rect x="0.5" y="0.5" width="10" height="10" rx="1.5" fill="url(#mg)" stroke="#4A7CC8" stroke-width=".6"/><path d="M3 6.5L5.5 4L8 6.5" fill="none" stroke="#fff" stroke-width="1.2"/></g></svg>
<span class="t" style="left:261px;top:274px;color:#000">Task Move Up</span>
<span class="t" style="left:372.8125px;top:274px;color:#000">Ctrl+Up</span>
<svg style="position:absolute;left:248px;top:285px" width="11" height="11" viewBox="0 0 11 11"><defs><linearGradient id="mg" x1="0" y1="0" x2="0" y2="1"><stop offset="0" stop-color="#78B0F4"/><stop offset="1" stop-color="#3472D4"/></linearGradient></defs><g transform="translate(1,1) scale(.82)"><rect x="0.5" y="0.5" width="10" height="10" rx="1.5" fill="url(#mg)" stroke="#4A7CC8" stroke-width=".6"/><path d="M3 4.5L5.5 7L8 4.5" fill="none" stroke="#fff" stroke-width="1.2"/></g></svg>
<span class="t" style="left:261px;top:286px;color:#000">Task Move Down</span>
<span class="t" style="left:363.921875px;top:286px;color:#000">Ctrl+Down</span>
<div style="left:249px;top:298px;width:162px;height:1px;background:#C5C2B8"></div>
<svg style="position:absolute;left:248px;top:301px" width="11" height="11" viewBox="0 0 11 11"><defs><linearGradient id="mg" x1="0" y1="0" x2="0" y2="1"><stop offset="0" stop-color="#78B0F4"/><stop offset="1" stop-color="#3472D4"/></linearGradient></defs><g transform="translate(1,1) scale(.82)"><rect x="0.5" y="0.5" width="10" height="10" rx="1.5" fill="url(#mg)" stroke="#4A7CC8" stroke-width=".6"/><path d="M3 5L5.5 2.5L8 5M3 8L5.5 5.5L8 8" fill="none" stroke="#fff" stroke-width="1.2"/></g></svg>
<span class="t" style="left:261px;top:302px;color:#000">Increase Priority</span>
<span class="t" style="left:355.53125px;top:302px;color:#000">Shift+Ctrl+Up</span>
<svg style="position:absolute;left:248px;top:313px" width="11" height="11" viewBox="0 0 11 11"><defs><linearGradient id="mg" x1="0" y1="0" x2="0" y2="1"><stop offset="0" stop-color="#78B0F4"/><stop offset="1" stop-color="#3472D4"/></linearGradient></defs><g transform="translate(1,1) scale(.82)"><rect x="0.5" y="0.5" width="10" height="10" rx="1.5" fill="url(#mg)" stroke="#4A7CC8" stroke-width=".6"/><path d="M3 3L5.5 5.5L8 3M3 6L5.5 8.5L8 6" fill="none" stroke="#fff" stroke-width="1.2"/></g></svg>
<span class="t" style="left:261px;top:314px;color:#000">Decrease Priority</span>
<span class="t" style="left:346.640625px;top:314px;color:#000">Shift+Ctrl+Down</span>
<div style="left:249px;top:326px;width:162px;height:1px;background:#C5C2B8"></div>
<span class="t" style="left:251px;top:331px;color:#ACA899">Filter Presets</span>
<div style="left:293px;top:329px;width:118px;height:12px;background:#EBEADF;border:1px solid #C8C6BA"></div>
<span class="t" style="left:295px;top:331px;color:#ACA899">Custom</span>
<svg style="position:absolute;left:403px;top:333px" width="6" height="4"><path d="M0.5 0.5L3 3L5.5 0.5" fill="none" stroke="#C0C0B8" stroke-width="1"/></svg>
<div style="left:248px;top:345px;width:13px;height:13px;background:#E8E6DE;border:1px solid #B8B4A4"></div>
<svg style="position:absolute;left:249px;top:346px" width="11" height="11"><path d="M1 4Q5 1 9 4V9H1Z" fill="#F4F0E4" stroke="#A0A0A8" stroke-width=".6"/><path d="M2 3Q5 0.5 8 3" fill="#F0C040"/><path d="M5 8H10M8.5 6.5L10 8L8.5 9.5" stroke="#4070D0" stroke-width="1" fill="none"/></svg>
<div style="left:261px;top:346px;width:150px;height:12px;background:#316AC5"></div>
<span class="t" style="left:262px;top:347px;color:#fff">Send task to assigned resource</span>
<span class="t" style="left:377px;top:347px;color:#fff">Ctrl+I</span>
<div style="left:249px;top:360px;width:162px;height:1px;background:#C5C2B8"></div>
<svg style="position:absolute;left:248px;top:362px" width="11" height="11" viewBox="0 0 11 11"><path d="M1 2H4V9H1M4 5.5H7M7 3.5H10M7 7.5H10" fill="none" stroke="#4A80D0" stroke-width=".8"/><circle cx="7" cy="5.5" r="1.2" fill="#60B060"/></svg>
<span class="t" style="left:261px;top:364px;color:#000">Paste New Task(s)</span>
<div style="left:249px;top:376px;width:162px;height:1px;background:#C5C2B8"></div>
<span class="t" style="left:261px;top:380px;color:#000">Change Status</span>
<svg style="position:absolute;left:405px;top:382px" width="4" height="6"><path d="M0 0L3 2.5L0 5Z" fill="#000"/></svg>
<span class="t" style="left:261px;top:391px;color:#000">Change Category</span>
<svg style="position:absolute;left:405px;top:393px" width="4" height="6"><path d="M0 0L3 2.5L0 5Z" fill="#000"/></svg>
<span class="t" style="left:251px;top:402px">Set Due Date for selected tasks</span>
<div style="left:349px;top:401px;width:62px;height:12px;background:#fff;border:1px solid #7F9DB9"></div>
<span class="t" style="left:351px;top:403px">Tue 16/12/2008</span>
<div style="left:402px;top:402px;width:8px;height:10px;background:#C3D3F3;border:1px solid #B6C8EE"><svg style="position:absolute;left:0.5px;top:2.5px" width="6" height="4"><path d="M0.5 0.5L3 3L5.5 0.5" fill="none" stroke="#4D6185" stroke-width="1.1"/></svg></div>
<div style="left:249px;top:415px;width:162px;height:1px;background:#C5C2B8"></div>
<span class="t" style="left:261px;top:418px;color:#000">Export</span>
<svg style="position:absolute;left:405px;top:420px" width="4" height="6"><path d="M0 0L3 2.5L0 5Z" fill="#000"/></svg>
<div style="left:249px;top:431px;width:162px;height:1px;background:#C5C2B8"></div>
<div style="left:248px;top:432px;width:13px;height:13px;background:#FFFFFF;border:1px solid #B8B4A4"></div>
<svg style="position:absolute;left:250px;top:434px" width="9" height="9"><path d="M1.5 4.5L3.5 6.5L7.5 2.5" fill="none" stroke="#000" stroke-width="1.3"/></svg>
<span class="t" style="left:261px;top:434px;color:#000">Always Expand</span>
<span class="t" style="left:261px;top:446px;color:#ACA899">Expand All</span>
<span class="t" style="left:365.3125px;top:446px;color:#ACA899">Ctrl+Alt+E</span>
<span class="t" style="left:261px;top:458px;color:#ACA899">Collapse All</span>
<span class="t" style="left:364.90625px;top:458px;color:#ACA899">Ctrl+Alt+C</span>
<!--/MENU-->
<!--CUST-->
<div style="left:496px;top:264px;width:112px;height:175px;background:#7888DC;border:1px solid #6A7AD4"></div>
<div style="left:498px;top:266px;width:108px;height:10px;background:linear-gradient(#8C9CE8,#7A8ADC)"></div>
<span class="t" style="left:498px;top:267px;color:#DCE4FC;font-weight:bold;letter-spacing:0">Customization</span>
<div style="left:597px;top:268px;width:8px;height:8px;background:#F6F2F6;border:1px solid #D890A0;border-radius:1px"><svg style="position:absolute;left:0px;top:0px" width="6" height="6"><path d="M1.2 1.2L4.8 4.8M4.8 1.2L1.2 4.8" stroke="#D84860" stroke-width="1"/></svg></div>
<div style="left:498px;top:276px;width:108px;height:161px;background:#ECE9D8"></div>
<div style="left:500px;top:278px;width:35px;height:12px;background:#FCFCFA;border:1px solid #C8C6BA;border-top:2px solid #F8C878;border-bottom:none"></div>
<span class="t" style="left:503px;top:280px">Columns</span>
<div style="left:500px;top:289px;width:103px;height:145px;background:#ECE9D8;border:1px solid #C0BEB0;border-right-color:#fff;border-bottom-color:#fff"></div>
<div style="left:501px;top:292px;width:101px;height:11px;background:#EBE8D8;border-bottom:1px solid #C8C4B4;border-right:1px solid #C8C4B4;border-top:1px solid #F8F8F4"></div>
<span class="t" style="left:503px;top:293px">Actual Time</span>
<div style="left:501px;top:303px;width:101px;height:11px;background:#EBE8D8;border-bottom:1px solid #C8C4B4;border-right:1px solid #C8C4B4;border-top:1px solid #F8F8F4"></div>
<span class="t" style="left:503px;top:304px">Date Completed</span>
<div style="left:501px;top:314px;width:101px;height:11px;background:#EBE8D8;border-bottom:1px solid #C8C4B4;border-right:1px solid #C8C4B4;border-top:1px solid #F8F8F4"></div>
<span class="t" style="left:503px;top:315px">Date Created</span>
<div style="left:501px;top:325px;width:101px;height:11px;background:#EBE8D8;border-bottom:1px solid #C8C4B4;border-right:1px solid #C8C4B4;border-top:1px solid #F8F8F4"></div>
<span class="t" style="left:503px;top:326px">Date Opened</span>
<div style="left:501px;top:336px;width:101px;height:11px;background:#EBE8D8;border-bottom:1px solid #C8C4B4;border-right:1px solid #C8C4B4;border-top:1px solid #F8F8F4"></div>
<span class="t" style="left:503px;top:337px">Days Left</span>
<div style="left:501px;top:347px;width:101px;height:11px;background:#EBE8D8;border-bottom:1px solid #C8C4B4;border-right:1px solid #C8C4B4;border-top:1px solid #F8F8F4"></div>
<span class="t" style="left:503px;top:348px">Department</span>
<div style="left:501px;top:358px;width:101px;height:11px;background:#EBE8D8;border-bottom:1px solid #C8C4B4;border-right:1px solid #C8C4B4;border-top:1px solid #F8F8F4"></div>
<span class="t" style="left:503px;top:359px">Due Date</span>
<div style="left:501px;top:369px;width:101px;height:11px;background:#EBE8D8;border-bottom:1px solid #C8C4B4;border-right:1px solid #C8C4B4;border-top:1px solid #F8F8F4"></div>
<span class="t" style="left:503px;top:370px">Hyperlink</span>
<div style="left:501px;top:380px;width:101px;height:11px;background:#EBE8D8;border-bottom:1px solid #C8C4B4;border-right:1px solid #C8C4B4;border-top:1px solid #F8F8F4"></div>
<span class="t" style="left:503px;top:381px">Reminder Time</span>
<div style="left:501px;top:391px;width:101px;height:11px;background:#EBE8D8;border-bottom:1px solid #C8C4B4;border-right:1px solid #C8C4B4;border-top:1px solid #F8F8F4"></div>
<span class="t" style="left:503px;top:392px">Resources</span>
<!--/CUST-->
</body></html>
